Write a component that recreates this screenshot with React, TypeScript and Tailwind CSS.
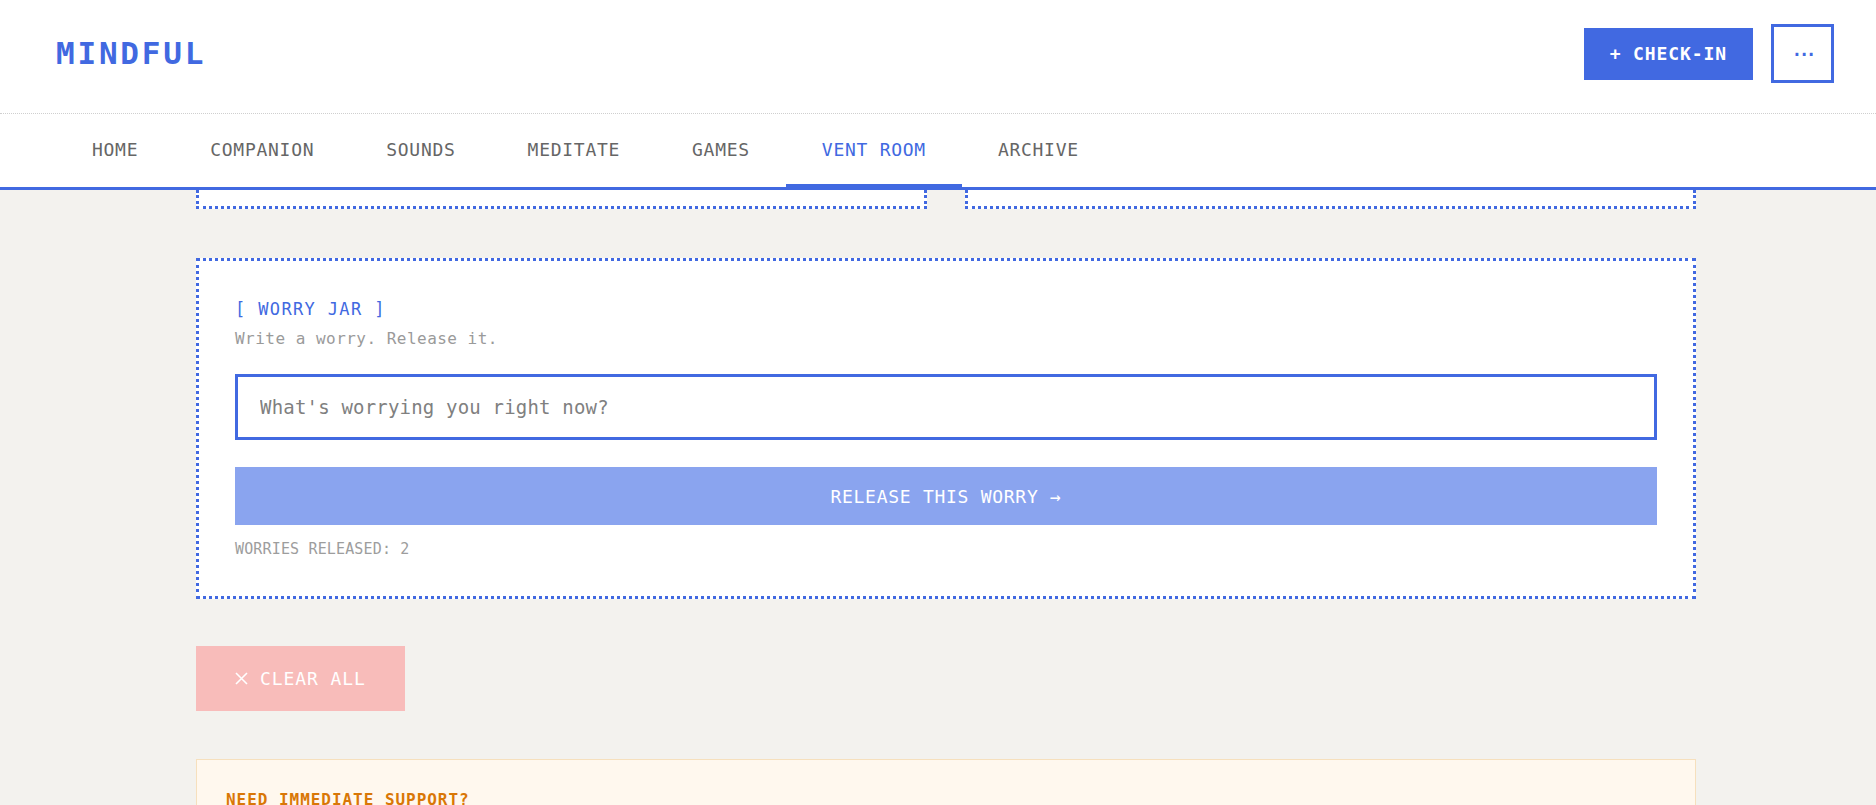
import React from "react";

const tabs = ["HOME", "COMPANION", "SOUNDS", "MEDITATE", "GAMES", "VENT ROOM", "ARCHIVE"];

const App = () => {
  return (
    <div className="min-h-screen bg-[#F3F2EE] font-['DejaVu_Sans_Mono',monospace] pb-24">
      <header className="bg-white">
        <div className="flex items-center justify-between pl-14 pr-[42px] pt-6 pb-[30px] border-b border-dotted border-[#cfcfcf]">
          <div className="text-[31px] font-bold tracking-[0.09em] text-[#4169E1]">MINDFUL</div>
          <div className="flex items-center gap-[18px]">
            <button className="h-[52px] px-[26px] bg-[#4169E1] text-white text-[18px] font-bold tracking-[0.05em]">
              + CHECK-IN
            </button>
            <button className="w-[63px] h-[59px] pb-[5px] border-[3px] border-[#4169E1] bg-white text-[#4169E1] text-[17px] font-bold tracking-[-0.18em]">
              ...
            </button>
          </div>
        </div>

        <nav className="flex pl-14 border-b-[3px] border-[#4169E1]">
          {tabs.map((tab) => {
            const active = tab === "VENT ROOM";
            return (
              <div
                key={tab}
                className={
                  active
                    ? "h-[73px] px-9 flex items-center border-b-[3px] border-[#4169E1] text-[#4169E1] text-[18px] tracking-[0.04em]"
                    : "h-[73px] px-9 flex items-center border-b-[3px] border-transparent text-[#666] text-[18px] tracking-[0.04em]"
                }
              >
                {tab}
              </div>
            );
          })}
        </nav>
      </header>

      <main className="ml-[196px] w-[1500px]">
        {/* bottom edge of the cards scrolled under the header */}
        <div className="grid grid-cols-2 gap-[38px]">
          <div className="h-[19px] bg-white border-x-[3px] border-b-[3px] border-dotted border-[#4169E1]" />
          <div className="h-[19px] bg-white border-x-[3px] border-b-[3px] border-dotted border-[#4169E1]" />
        </div>

        <section className="mt-[49px] bg-white border-[3px] border-dotted border-[#4169E1] p-9">
          <h2 className="leading-[24px] text-[17px] tracking-[0.08em] text-[#4169E1]">[ WORRY JAR ]</h2>
          <p className="mt-[6px] leading-[24px] text-[16px] tracking-[0.03em] text-[#9a9a9a]">
            Write a worry. Release it.
          </p>
          <input
            className="mt-[23px] w-full h-[66px] border-[3px] border-[#4169E1] px-[22px] text-[19px] tracking-[0.01em] text-[#333] outline-none placeholder:text-[#808080]"
            placeholder="What's worrying you right now?"
          />
          <button className="mt-[27px] w-full h-[58px] bg-[#8AA4EF] text-white text-[18px] tracking-[0.04em]">
            RELEASE THIS WORRY →
          </button>
          <div className="mt-[13px] leading-[22px] text-[15px] tracking-[0.01em] text-[#9d9d9d]">
            WORRIES RELEASED: 2
          </div>
        </section>

        <button className="mt-[47px] h-[65px] px-[39px] flex items-center gap-3 bg-[#F8BCBA] text-white text-[18px] tracking-[0.05em]">
          <svg width="13" height="13" viewBox="0 0 13 13" fill="none">
            <path d="M1 1L12 12M12 1L1 12" stroke="white" strokeWidth="1.6" />
          </svg>
          CLEAR ALL
        </button>

        <div className="mt-12 bg-[#FFF8EE] border border-[#F6E0BD] pt-7 px-[29px] pb-16">
          <h3 className="leading-[24px] text-[16px] font-bold tracking-[0.06em] text-[#D97706]">NEED IMMEDIATE SUPPORT?</h3>
        </div>
      </main>
    </div>
  );
};

export default App;
